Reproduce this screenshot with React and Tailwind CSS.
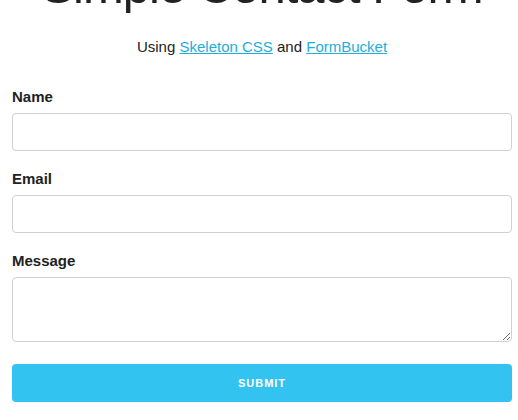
export default function App() {
  return (
    <div className="w-[518px] h-[420px] overflow-hidden bg-white pl-3 pr-[6px] text-[#222] font-['Liberation_Sans',Arial,sans-serif]">
      <h1 className="mt-[-43px] text-center text-[49px] leading-[59px] tracking-[-1px] font-light whitespace-nowrap">
        Simple Contact Form
      </h1>
      <p className="mt-[19px] text-center text-[15px] leading-6">
        Using{" "}
        <a href="#" className="text-[#1EAEDB] underline">Skeleton CSS</a>{" "}
        and{" "}
        <a href="#" className="text-[#1EAEDB] underline">FormBucket</a>
      </p>
      <form className="mt-[25px]">
        <label className="block text-[15px] leading-6 pt-px h-6 font-bold mb-[5px]">Name</label>
        <input type="text" className="block w-full h-[38px] border border-[#D1D1D1] rounded-[4px] bg-white mb-[15px]" />
        <label className="block text-[15px] leading-6 pt-px h-6 font-bold mb-[5px]">Email</label>
        <input type="email" className="block w-full h-[38px] border border-[#D1D1D1] rounded-[4px] bg-white mb-[15px]" />
        <label className="block text-[15px] leading-6 pt-px h-6 font-bold mb-[5px]">Message</label>
        <textarea className="block w-full h-[65px] border border-[#D1D1D1] rounded-[4px] bg-white mb-[22px]" />
        <button type="button" className="block w-full h-[38px] rounded-[4px] bg-[#33C3F0] text-white text-[11px] font-bold tracking-[1px] uppercase">
          Submit
        </button>
      </form>
    </div>
  );
}
